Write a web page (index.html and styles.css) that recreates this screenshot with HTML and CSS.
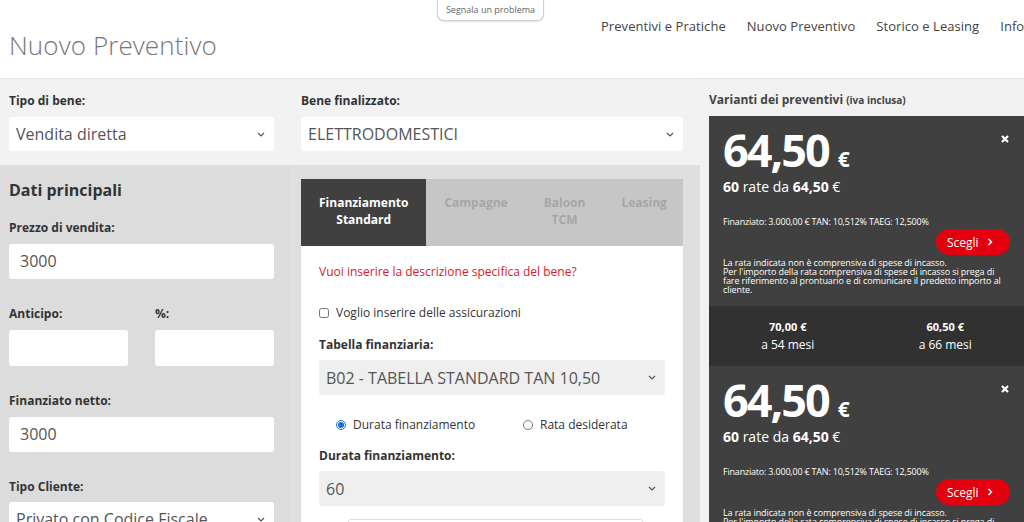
FILE: index.html
```html
<!DOCTYPE html>
<html lang="it">
<head>
<meta charset="utf-8">
<title>Nuovo Preventivo</title>
<link rel="stylesheet" href="styles.css">
</head>
<body>
<header class="top">
  <div class="report">Segnala un problema</div>
  <h1 class="title">Nuovo Preventivo</h1>
  <nav class="nav">
    <a class="nav-item">Preventivi e Pratiche</a>
    <a class="nav-item">Nuovo Preventivo</a>
    <a class="nav-item">Storico e Leasing</a>
    <a class="nav-item">Info</a>
  </nav>
</header>
<main class="main">
  <div class="work">
    <div class="band">
      <div class="field field-a">
        <div class="lbl">Tipo di bene:</div>
        <div class="sel"><span>Vendita diretta</span><svg class="chev" viewBox="0 0 8 5" width="8" height="5"><polyline points="1,1 4,4 7,1"/></svg></div>
      </div>
      <div class="field field-b">
        <div class="lbl">Bene finalizzato:</div>
        <div class="sel"><span>ELETTRODOMESTICI</span><svg class="chev" viewBox="0 0 8 5" width="8" height="5"><polyline points="1,1 4,4 7,1"/></svg></div>
      </div>
    </div>
    <div class="lower">
      <div class="col-a">
        <h2 class="sec">Dati principali</h2>
        <div class="grp">
          <div class="lbl">Prezzo di vendita:</div>
          <div class="inp">3000</div>
        </div>
        <div class="grp pair">
          <div class="half">
            <div class="lbl">Anticipo:</div>
            <div class="inp"></div>
          </div>
          <div class="half">
            <div class="lbl">%:</div>
            <div class="inp"></div>
          </div>
        </div>
        <div class="grp">
          <div class="lbl">Finanziato netto:</div>
          <div class="inp">3000</div>
        </div>
        <div class="grp grp-last">
          <div class="lbl">Tipo Cliente:</div>
          <div class="sel sel-tight"><span>Privato con Codice Fiscale</span><svg class="chev" viewBox="0 0 8 5" width="8" height="5"><polyline points="1,1 4,4 7,1"/></svg></div>
        </div>
      </div>
      <div class="col-b">
        <div class="panel">
          <div class="tabs">
            <div class="tab tab-on">Finanziamento<br>Standard</div>
            <div class="tab">Campagne</div>
            <div class="tab">Baloon<br>TCM</div>
            <div class="tab">Leasing</div>
          </div>
          <div class="pbody">
            <div class="link">Vuoi inserire la descrizione specifica del bene?</div>
            <label class="check"><input type="checkbox"> <span>Voglio inserire delle assicurazioni</span></label>
            <div class="lbl lbl-p">Tabella finanziaria:</div>
            <div class="sel sel-grey"><span>B02 - TABELLA STANDARD TAN 10,50</span><svg class="chev" viewBox="0 0 8 5" width="8" height="5"><polyline points="1,1 4,4 7,1"/></svg></div>
            <div class="radios">
              <label class="radio r1"><input type="radio" name="mode" checked> <span>Durata finanziamento</span></label>
              <label class="radio"><input type="radio" name="mode"> <span>Rata desiderata</span></label>
            </div>
            <div class="lbl lbl-d">Durata finanziamento:</div>
            <div class="sel sel-grey"><span>60</span><svg class="chev" viewBox="0 0 8 5" width="8" height="5"><polyline points="1,1 4,4 7,1"/></svg></div>
            <div class="more"></div>
          </div>
        </div>
      </div>
    </div>
  </div>
  <aside class="side">
    <div class="side-title">Varianti dei preventivi <small>(iva inclusa)</small></div>
    <div class="card">
      <div class="card-top">
        <div class="amount">64,50<span class="eur">€</span></div>
        <svg class="close" viewBox="0 0 8 8" width="8" height="8"><path d="M1 1L7 7M7 1L1 7"/></svg>
      </div>
      <div class="rate"><b>60</b> rate da <b>64,50</b> €</div>
      <div class="fin">Finanziato: 3.000,00 € TAN: 10,512% TAEG: 12,500%</div>
      <div class="btn-row"><button class="btn">Scegli<svg viewBox="0 0 6 8" width="6" height="8"><polyline points="1.5,1 4.5,4 1.5,7"/></svg></button></div>
      <p class="note">La rata indicata non è comprensiva di spese di incasso.<br>Per l'importo della rata comprensiva di spese di incasso si prega di<br>fare riferimento al prontuario e di comunicare il predetto importo al<br>cliente.</p>
    </div>
    <div class="alts">
      <div class="alt"><b>70,00 €</b><span>a 54 mesi</span></div>
      <div class="alt"><b>60,50 €</b><span>a 66 mesi</span></div>
    </div>
    <div class="card">
      <div class="card-top">
        <div class="amount">64,50<span class="eur">€</span></div>
        <svg class="close" viewBox="0 0 8 8" width="8" height="8"><path d="M1 1L7 7M7 1L1 7"/></svg>
      </div>
      <div class="rate"><b>60</b> rate da <b>64,50</b> €</div>
      <div class="fin">Finanziato: 3.000,00 € TAN: 10,512% TAEG: 12,500%</div>
      <div class="btn-row"><button class="btn">Scegli<svg viewBox="0 0 6 8" width="6" height="8"><polyline points="1.5,1 4.5,4 1.5,7"/></svg></button></div>
      <p class="note">La rata indicata non è comprensiva di spese di incasso.<br>Per l'importo della rata comprensiva di spese di incasso si prega di<br>fare riferimento al prontuario e di comunicare il predetto importo al<br>cliente.</p>
    </div>
  </aside>
</main>
</body>
</html>
```
FILE: styles.css
```css
* { box-sizing: border-box; }
html, body { margin: 0; height: 522px; overflow: hidden; }
body {
  font-family: "Open Sans", "Liberation Sans", sans-serif;
  color: #333;
  background: #fff;
  width: 1024px;
}

/* header */
.top {
  position: relative;
  display: flex;
  align-items: flex-start;
  height: 79px;
  border-bottom: 1px solid #e8e8e8;
  background: #fff;
}
.report {
  position: absolute;
  left: 437px;
  top: -1px;
  width: 107px;
  height: 22px;
  border: 1px solid #cfcfcf;
  border-top: none;
  border-radius: 0 0 7px 7px;
  box-shadow: 0 1px 2px rgba(0,0,0,0.12);
  font-size: 9px;
  line-height: 21px;
  text-align: center;
  color: #666;
  background: #fff;
}
.title {
  flex: 0 0 601px;
  margin: 0;
  padding: 30px 0 0 9px;
  font-size: 26px;
  line-height: 30px;
  font-weight: 300;
  color: #777;
  letter-spacing: 0.1px;
}
.nav {
  display: flex;
  white-space: nowrap;
  padding-top: 17px;
}
.nav-item {
  font-size: 13px;
  line-height: 18px;
  color: #444;
  margin-right: 21px;
  letter-spacing: 0.05px;
}

/* main */
.main {
  display: flex;
  height: 443px;
  overflow: hidden;
}
.work { width: 700px; flex: none; }
.band {
  display: flex;
  height: 86px;
  padding: 14px 0 0 9px;
  background: #f2f2f2;
}
.field-a { width: 265px; }
.field-b { width: 382px; margin-left: 27px; }

.lbl {
  font-size: 12px;
  font-weight: 700;
  line-height: 16px;
  color: #333;
  margin-bottom: 8px;
}
.sel {
  display: flex;
  align-items: center;
  justify-content: space-between;
  height: 34px;
  padding: 0 9px 0 7px;
  background: #fff;
  border-radius: 3px;
  font-size: 16px;
  color: #555;
}
.chev { fill: none; stroke: #555; stroke-width: 1.2; }

.lower { display: flex; height: 357px; }
.col-a {
  width: 290px;
  padding: 14px 16px 0 9px;
  background: #dcdcdc;
}
.sec {
  margin: 0 0 19px;
  font-size: 16px;
  line-height: 22px;
  font-weight: 700;
  color: #333;
}
.grp { margin-bottom: 27px; }
.grp-last .lbl { margin-bottom: 7px; }
.pair { display: flex; gap: 27px; }
.half { flex: 1; }
.inp {
  height: 35px;
  padding: 0 11px;
  background: #fff;
  border-radius: 3px;
  font-size: 16px;
  line-height: 35px;
  color: #555;
}
.pair .inp { height: 36px; }

.col-b {
  width: 410px;
  padding: 14px 17px 0 11px;
  background: #dfdfdf;
}
.panel { background: #fff; height: 400px; }
.tabs {
  display: flex;
  height: 67px;
  background: #c6c6c6;
}
.tab {
  padding: 15px 18px 0;
  font-size: 12px;
  font-weight: 700;
  line-height: 17px;
  text-align: center;
  color: #a6a6a6;
}
.tab-on { background: #404040; color: #fff; }

.pbody { padding: 17px 18px 0; }
.link {
  font-size: 12px;
  line-height: 17px;
  color: #d3202a;
}
.check, .radio {
  display: flex;
  align-items: center;
  font-size: 12px;
  line-height: 17px;
  color: #333;
}
.check { margin-top: 24px; }
.check input, .radio input {
  width: 10px;
  height: 10px;
  margin: 0 7px 0 0;
  accent-color: #1a6fd6;
}
.lbl-p { margin-top: 16px; margin-bottom: 7px; }
.sel-grey { background: #efefef; height: 35px; }
.radios {
  display: flex;
  margin-top: 21px;
  padding-left: 17px;
}
.r1 { width: 187px; }
.lbl-d { margin-top: 15px; margin-bottom: 7px; }
.more {
  margin: 13px 22px 0 29px;
  height: 30px;
  border: 1px solid #dedede;
  border-radius: 3px;
}

/* right side */
.side {
  width: 324px;
  flex: none;
  padding: 13px 0 0 9px;
  background: #f1f1f1;
}
.side-title {
  font-size: 12px;
  font-weight: 700;
  line-height: 16px;
  color: #444;
  margin-bottom: 8px;
}
.side-title small { font-size: 10px; }
.card {
  background: #404040;
  color: #fff;
  padding: 9px 14px 12px;
}
.card-top {
  display: flex;
  justify-content: space-between;
  align-items: flex-start;
}
.amount {
  font-size: 45px;
  font-weight: 700;
  line-height: 50px;
  letter-spacing: -2px;
}
.eur { font-size: 21px; line-height: 0; margin-left: 9px; letter-spacing: 0; }
.close {
  margin-top: 10px;
  margin-right: 1px;
  fill: none;
  stroke: #fff;
  stroke-width: 2.2;
}
.rate {
  margin-top: 2px;
  font-size: 14px;
  line-height: 19px;
}
.fin {
  margin-top: 20px;
  font-size: 9px;
  line-height: 11px;
  letter-spacing: -0.2px;
}
.btn-row {
  display: flex;
  justify-content: flex-end;
  margin-top: 2px;
}
.btn {
  display: flex;
  align-items: center;
  gap: 8px;
  height: 26px;
  width: 74px;
  padding: 0 0 0 11px;
  border: none;
  border-radius: 13px;
  background: #e3000f;
  color: #fff;
  font-family: inherit;
  font-size: 12px;
}
.btn svg { fill: none; stroke: #fff; stroke-width: 1.5; }
.note {
  margin: 3px 0 0;
  font-size: 9px;
  line-height: 9px;
  letter-spacing: -0.1px;
  white-space: nowrap;
}
.alts {
  display: grid;
  grid-template-columns: 1fr 1fr;
  height: 60px;
  padding-top: 14px;
  background: #313131;
  color: #fff;
  text-align: center;
}
.alt b {
  display: block;
  font-size: 11px;
  line-height: 14px;
}
.alt span {
  display: block;
  margin-top: 2px;
  font-size: 12px;
  line-height: 17px;
}
```
